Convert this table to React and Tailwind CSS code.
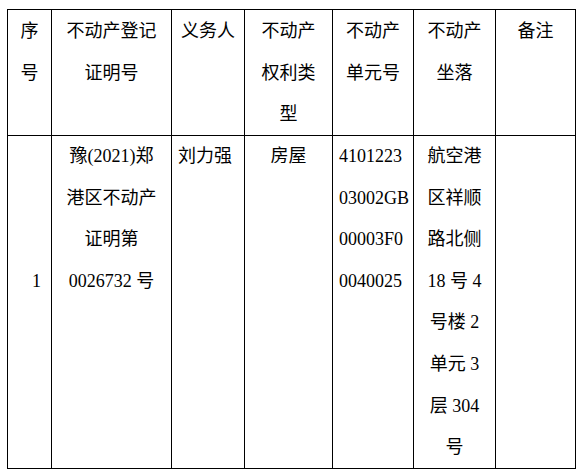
import React from "react";

const font = { fontFamily: '"Liberation Serif", "Noto Sans CJK SC", serif' };

function Lines({ lines, className = "" }) {
  return (
    <div className={className}>
      {lines.map((t, i) => (
        <div key={i} className="h-[41.6px] leading-[41.6px] whitespace-pre">
          {t}
        </div>
      ))}
    </div>
  );
}

export default function App() {
  const header = [
    ["序", "号"],
    ["不动产登记", "证明号"],
    ["义务人"],
    ["不动产", "权利类", "型"],
    ["不动产", "单元号"],
    ["不动产", "坐落"],
    ["备注"],
  ];

  return (
    <div className="w-[584px] h-[476px] bg-white pt-[9px] pl-[7px]" style={font}>
      <div className="grid grid-cols-[44px_120px_73px_88px_81px_82px_80px] grid-rows-[126px_333px] w-[569px] border-l border-t border-black text-[18px] text-black">
        {header.map((lines, i) => (
          <div key={i} className="border-r border-b border-black pt-px">
            <Lines lines={lines} className="text-center" />
          </div>
        ))}

        <div className="border-r border-b border-black">
          <Lines lines={["", "", "", "1"]} className="pl-[24px]" />
        </div>
        <div className="border-r border-b border-black">
          <Lines
            lines={["豫(2021)郑", "港区不动产", "证明第", "0026732 号"]}
            className="text-center"
          />
        </div>
        <div className="border-r border-b border-black">
          <Lines lines={["刘力强"]} className="pl-[6px]" />
        </div>
        <div className="border-r border-b border-black">
          <Lines lines={["房屋"]} className="text-center" />
        </div>
        <div className="border-r border-b border-black">
          <Lines
            lines={["4101223", "03002GB", "00003F0", "0040025"]}
            className="pl-[6px]"
          />
        </div>
        <div className="border-r border-b border-black">
          <Lines
            lines={[
              "航空港",
              "区祥顺",
              "路北侧",
              "18 号 4",
              "号楼 2",
              "单元 3",
              "层 304",
              "号",
            ]}
            className="text-center"
          />
        </div>
        <div className="border-r border-b border-black" />
      </div>
    </div>
  );
}
